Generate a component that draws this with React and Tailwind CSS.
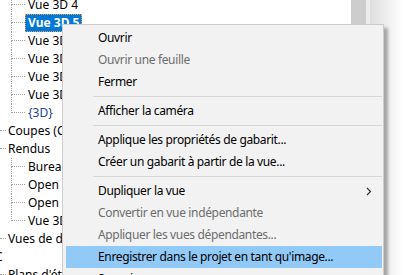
import React from 'react';

const font = { fontFamily: '"Noto Sans", "Segoe UI", sans-serif' };

// tree rows: level 3 = child with guide, level 2 = top node
const rows = [
  { label: 'Vue 3D 4', level: 3 },
  { label: 'Vue 3D 5', level: 3, selected: true },
  { label: 'Vue 3D 6', level: 3 },
  { label: 'Vue 3D 7', level: 3 },
  { label: 'Vue 3D 8', level: 3 },
  { label: 'Vue 3D 9', level: 3 },
  { label: '{3D}', level: 3, last: true, blue: true },
  { label: 'Coupes (Coupe de bâtiment)', level: 2 },
  { label: 'Rendus', level: 2 },
  { label: 'Bureau', level: 3 },
  { label: 'Open space 1', level: 3 },
  { label: 'Open space 2', level: 3 },
  { label: 'Vue 3D 1', level: 3, last: true },
  { label: 'Vues de dessin (Détail)', level: 2 },
  { label: 'C', level: 1 },
  { label: "Plans d'étage", level: 2 },
];

const menu = [
  { label: 'Ouvrir' },
  { label: 'Ouvrir une feuille', disabled: true },
  { label: 'Fermer' },
  { sep: true },
  { label: 'Afficher la caméra' },
  { sep: true },
  { label: 'Applique les propriétés de gabarit...' },
  { label: 'Créer un gabarit à partir de la vue...' },
  { sep: true },
  { label: 'Dupliquer la vue', sub: true },
  { label: 'Convertir en vue indépendante', disabled: true },
  { label: 'Appliquer les vues dépendantes...', disabled: true },
  { label: "Enregistrer dans le projet en tant qu'image...", active: true },
  { label: 'Supprimer' },
];

const TreeRow = ({ row }) => {
  if (row.level === 1) {
    return (
      <div className="h-[18px] flex items-center text-[12px] text-black">
        <span className="ml-[-5px]">{row.label}</span>
      </div>
    );
  }
  if (row.level === 2) {
    return (
      <div className="h-[18px] flex items-center text-[12px] text-black whitespace-nowrap">
        <div className="w-[6px] h-[9px] self-start border-b border-dotted border-[#a0a0a0]" />
        <span className="ml-[2px]">{row.label}</span>
      </div>
    );
  }
  return (
    <div className="h-[18px] flex text-[12px] whitespace-nowrap">
      <div className="w-[11px] shrink-0" />
      <div className="w-[14px] shrink-0 flex flex-col">
        <div className="h-[9px] border-l border-b border-dotted border-[#a0a0a0]" />
        <div className={`h-[9px] border-dotted border-[#a0a0a0] ${row.last ? '' : 'border-l'}`} />
      </div>
      {row.selected ? (
        <div className="h-[18px] flex items-center px-[2px] bg-[#0078d7] border border-dotted border-[#f0a050] text-white font-bold">
          {row.label}
        </div>
      ) : (
        <div className={`h-[18px] flex items-center px-[3px] ${row.blue ? 'text-[#203f90]' : 'text-black'}`}>
          {row.label}
        </div>
      )}
    </div>
  );
};

const Chevron = () => (
  <svg width="6" height="9" viewBox="0 0 6 9" className="shrink-0">
    <path d="M1 1 L4.5 4.5 L1 8" fill="none" stroke="#333" strokeWidth="1.2" />
  </svg>
);

const ContextMenu = () => (
  <div
    className="absolute left-[62px] top-[24px] w-[322px] bg-[#f2f2f2] border border-[#cccccc] pt-[2px] pl-[3px] pr-[1px] shadow-[4px_4px_3px_rgba(0,0,0,0.3)]"
  >
    {menu.map((item, i) =>
      item.sep ? (
        <div key={i} className="h-[7px] flex items-center pl-[27px]">
          <div className="h-px w-full bg-[#d7d7d7]" />
        </div>
      ) : (
        <div
          key={i}
          className={`h-[22px] flex items-center pl-[32px] pr-[10px] text-[12px] tracking-[-0.35px] whitespace-nowrap ${
            item.active ? 'bg-[#91c9f7]' : ''
          } ${item.disabled ? 'text-[#6d6d6d]' : 'text-black'}`}
        >
          <span className="flex-1">{item.label}</span>
          {item.sub && <Chevron />}
        </div>
      )
    )}
  </div>
);

export default function App() {
  return (
    <div className="relative w-[403px] h-[275px] overflow-hidden bg-white flex" style={font}>
      <div className="w-[351px] shrink-0 overflow-hidden">
        <div className="mt-[-4px]">
          {rows.map((r, i) => (
            <TreeRow key={i} row={r} />
          ))}
        </div>
      </div>
      <div className="w-[19px] shrink-0 bg-[#ececec] flex">
        <div className="w-[15px] h-full bg-[#cdcdcd]" />
      </div>
      <div className="flex-1 bg-gradient-to-r from-[#dedede] to-white" />
      <ContextMenu />
    </div>
  );
}
